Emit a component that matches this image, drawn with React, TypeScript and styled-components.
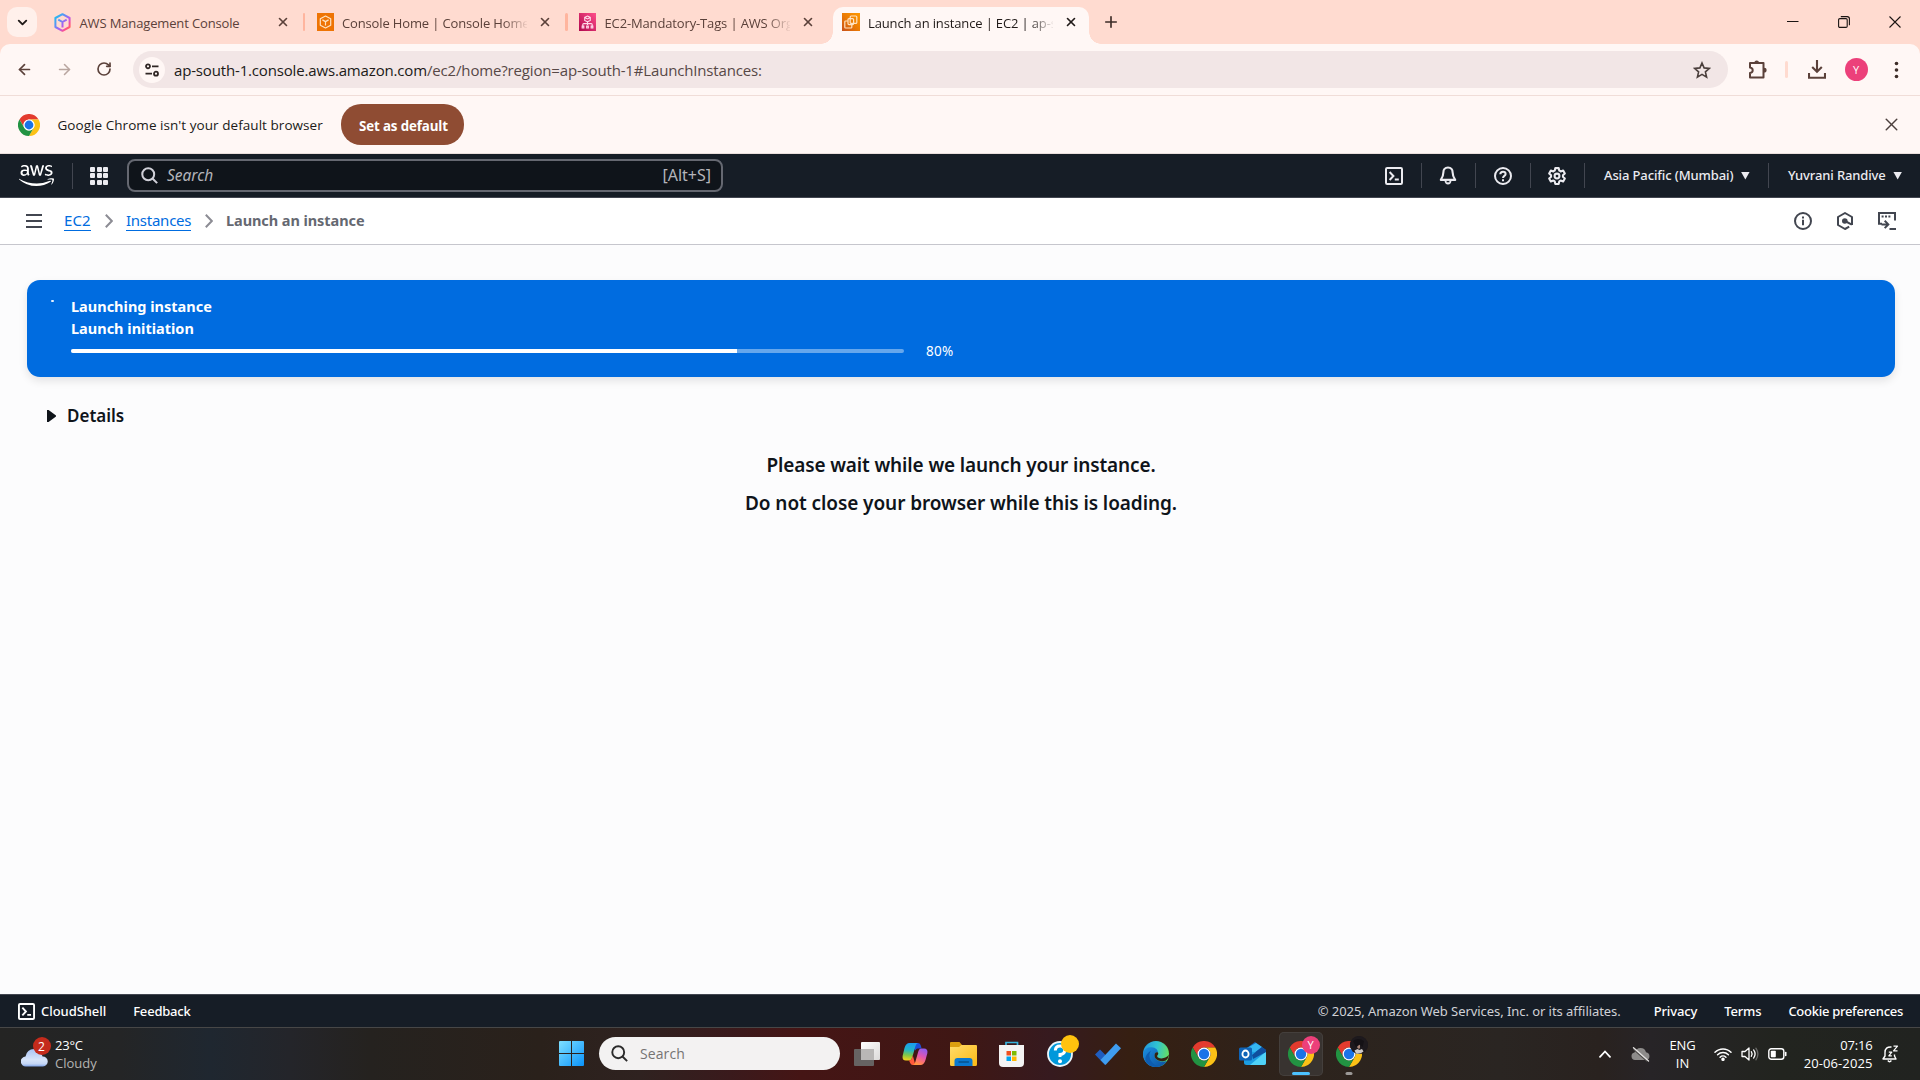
import React from "react";
import styled, { createGlobalStyle, css } from "styled-components";
import { ArrowLeft, ArrowRight, ChevronDown, Plus, RotateCw, X } from "lucide-react";
import { FaAws } from "react-icons/fa";

const SEGOE = `"Open Sans", "Noto Sans", sans-serif`;
const EMBER = `"Noto Sans", "Open Sans", sans-serif`;

const GlobalStyle = createGlobalStyle`
  *, *::before, *::after { box-sizing: border-box; }
  body { margin: 0; background: #fcfcfd; overflow: hidden; }
  svg { display: block; flex: none; }
`;

const Screen = styled.div`
  width: 1920px;
  height: 1080px;
  display: flex;
  flex-direction: column;
  overflow: hidden;
  background: #fcfcfd;
  font-family: ${SEGOE};
`;

const Label = styled.span<{ $size: number; $ls?: number; $weight?: number; $color?: string; $dy?: number }>`
  display: block;
  flex: none;
  white-space: nowrap;
  font-size: ${(p) => p.$size}px;
  letter-spacing: ${(p) => p.$ls ?? 0}px;
  font-weight: ${(p) => p.$weight ?? 400};
  color: ${(p) => p.$color ?? "inherit"};
  padding-top: ${(p) => Math.max(0, (p.$dy ?? 0) * 2)}px;
  padding-bottom: ${(p) => Math.max(0, -(p.$dy ?? 0) * 2)}px;
`;

/* ---------- browser tab strip ---------- */

const TabStrip = styled.div`
  height: 44px;
  flex: none;
  display: flex;
  align-items: flex-start;
  background: #ffdbd0;
`;

const TabSearch = styled.div`
  width: 30px;
  height: 30px;
  margin: 7px 8.5px 0 7px;
  border-radius: 10px;
  background: #fff0eb;
  color: #201a18;
  display: flex;
  align-items: center;
  justify-content: center;
`;

const Tab = styled.div<{ $active?: boolean }>`
  position: relative;
  width: 262.5px;
  height: 44px;
  padding: 0 0 0 8.5px;
  display: flex;
  align-items: center;
  color: ${(p) => (p.$active ? "#201a18" : "#5b413a")};
  ${(p) =>
    p.$active &&
    css`
      &::before {
        content: "";
        position: absolute;
        inset: 7px 6.5px 0 0;
        border-radius: 10px 10px 0 0;
        background: #fff7f5;
      }
      &::after {
        content: "";
        position: absolute;
        left: -12px;
        right: -5.5px;
        bottom: 0;
        height: 12px;
        background: radial-gradient(circle at 0 0, transparent 11.5px, #fff7f5 12px) left / 12px 12px no-repeat,
          radial-gradient(circle at 100% 0, transparent 11.5px, #fff7f5 12px) right / 12px 12px no-repeat;
      }
    `}
  & > * {
    position: relative;
    z-index: 1;
  }
`;

const TabTitle = styled.div<{ $fade: boolean }>`
  width: 185px;
  margin-left: 8.5px;
  ${(p) =>
    p.$fade &&
    css`
      mask-image: linear-gradient(90deg, #000 87%, transparent 101%);
    `}
`;

const TabClose = styled.div`
  width: 19px;
  margin-left: 8.5px;
  display: flex;
  justify-content: center;
`;

const TabDivider = styled.i<{ $hidden?: boolean }>`
  width: 2.5px;
  height: 18px;
  margin-left: 10.5px;
  border-radius: 2px;
  background: ${(p) => (p.$hidden ? "transparent" : "#ffb59e")};
`;

const NewTab = styled.div`
  height: 44px;
  margin-left: 6px;
  display: flex;
  align-items: center;
  color: #3d2c27;
`;

const WindowControls = styled.div`
  margin-left: auto;
  height: 44px;
  padding-right: 19px;
  display: flex;
  align-items: center;
  gap: 39px;
`;

/* ---------- browser toolbar ---------- */

const ToolbarShell = styled.div`
  flex: none;
  background: #ffdbd0;
`;

const Toolbar = styled.div`
  height: 52px;
  padding: 0 17px 0 16px;
  display: flex;
  align-items: center;
  background: #fff7f5;
  border-radius: 10px 10px 0 0;
  border-bottom: 1px solid #f0ddd8;
  color: #5b413a;
`;

const NavButtons = styled.div`
  display: flex;
  gap: 23px;
  width: 117px;
`;

const Omnibox = styled.div`
  width: 1595px;
  height: 37px;
  padding: 0 17px 0 6px;
  display: flex;
  align-items: center;
  border-radius: 19px;
  background: #f2e6e6;
  color: #201a18;
  & em {
    font-style: normal;
    color: #574846;
  }
`;

const SiteInfo = styled.div`
  width: 26px;
  height: 26px;
  margin-right: 9px;
  border-radius: 50%;
  background: #fff7f5;
  display: flex;
  align-items: center;
  justify-content: center;
`;

const Push = styled.div`
  margin-left: auto;
  display: flex;
`;

const ToolbarTools = styled.div`
  flex: 1;
  display: flex;
  align-items: center;
  padding-left: 20px;
`;

const ToolDivider = styled.i`
  width: 2.5px;
  height: 17px;
  margin: 0 20px 0 18px;
  border-radius: 2px;
  background: #ffdbd0;
`;

const Avatar = styled.div`
  width: 23px;
  height: 23px;
  margin: 0 26px 0 19px;
  border-radius: 50%;
  background: #ec407a;
  color: #fff;
  display: flex;
  align-items: center;
  justify-content: center;
`;

/* ---------- default-browser info bar ---------- */

const InfoBar = styled.div`
  height: 58px;
  flex: none;
  padding: 0 18px 0 18px;
  display: flex;
  align-items: center;
  background: #fff7f5;
  border-bottom: 1px solid #eadfdc;
  color: #201a18;
`;

const InfoText = styled.div`
  width: 283px;
  margin-left: 17.5px;
  margin-right: 0.5px;
`;

const DefaultButton = styled.button`
  width: 123px;
  height: 41px;
  padding: 0 0 0 18px;
  border: 0;
  border-radius: 20px;
  background: #8f4c33;
  color: #fff;
  font-family: inherit;
  text-align: left;
`;

/* ---------- AWS navigation ---------- */

const AwsNav = styled.header`
  height: 44px;
  flex: none;
  display: flex;
  align-items: center;
  padding-left: 19px;
  background: #161d26;
  border-bottom: 1px solid #424650;
  color: #ebebf0;
  font-family: ${EMBER};
`;

const LogoCell = styled.div`
  width: 54px;
  height: 26px;
  display: flex;
  align-items: center;
  border-right: 1px solid #424650;
  color: #fff;
`;

const ServicesGrid = styled.div`
  width: 18px;
  margin: 0 19px 0 17px;
  display: grid;
  grid-template-columns: repeat(3, 5px);
  gap: 1.5px;
  & i {
    height: 5px;
    border-radius: 1px;
    background: #ebebf0;
  }
`;

const SearchBox = styled.div`
  width: 596px;
  height: 33px;
  padding: 0 10px 0 12px;
  display: flex;
  align-items: center;
  border: 2px solid #656871;
  border-radius: 8px;
  background: #0f141a;
  color: #b4b4bb;
`;

const Placeholder = styled.div`
  margin-left: 9px;
  font-style: italic;
`;

const NavRight = styled.div`
  margin-left: auto;
  display: flex;
  align-items: center;
`;

const NavIcon = styled.div<{ $first?: boolean }>`
  width: 54.5px;
  height: 25px;
  display: flex;
  align-items: center;
  justify-content: center;
  border-left: 1px solid ${(p) => (p.$first ? "transparent" : "#424650")};
`;

const NavMenu = styled.div<{ $w: number }>`
  width: ${(p) => p.$w}px;
  height: 25px;
  padding-left: 19px;
  display: flex;
  align-items: center;
  gap: 7.5px;
  border-left: 1px solid #424650;
`;

const Caret = styled.i`
  width: 9px;
  height: 8px;
  background: currentColor;
  clip-path: polygon(0 0, 100% 0, 50% 100%);
`;

const Breadcrumbs = styled.nav`
  height: 47px;
  flex: none;
  padding: 0 24px 1px 26px;
  display: flex;
  align-items: center;
  background: #fff;
  border-bottom: 1px solid #c6c6cd;
  color: #424650;
  font-family: ${EMBER};
`;

const Crumb = styled.div<{ $link?: boolean; $w: number }>`
  width: ${(p) => p.$w}px;
  height: 21px;
  display: flex;
  align-items: center;
  color: ${(p) => (p.$link ? "#006ce0" : "#656871")};
  border-bottom: 1px solid ${(p) => (p.$link ? "#006ce0" : "transparent")};
`;

const CrumbGap = styled.div`
  width: 35px;
  display: flex;
  justify-content: center;
  color: #8c8c94;
`;

const CrumbTools = styled.div`
  margin-left: auto;
  display: flex;
  gap: 24px;
`;

/* ---------- page content ---------- */

const Content = styled.main`
  flex: 1;
  padding: 35px 25px 0 27px;
  color: #0f141a;
  font-family: ${EMBER};
`;

const Flash = styled.section`
  height: 97px;
  padding: 15px 0 0 24px;
  display: flex;
  gap: 17px;
  border-radius: 13px;
  background: #006ce0;
  color: #fff;
  box-shadow: 0 4px 8px rgba(0, 7, 22, 0.1);
`;

const SpinnerMark = styled.i`
  width: 3px;
  height: 2px;
  margin: 5px 0 0;
  border-radius: 1px;
  background: #e8f1fd;
`;

const FlashBody = styled.div`
  display: flex;
  flex-direction: column;
  & > span {
    line-height: 22px;
  }
`;

const ProgressRow = styled.div`
  height: 24px;
  display: flex;
  align-items: center;
  gap: 22px;
`;

const Track = styled.div`
  width: 833px;
  height: 4px;
  border-radius: 3px;
  overflow: hidden;
  background: #66a7ec;
`;

const Fill = styled.div`
  height: 100%;
  background: #fff;
`;

const Details = styled.div`
  margin: 26px 0 0 20px;
  height: 26px;
  display: flex;
  align-items: center;
  gap: 11px;
`;

const Disclosure = styled.i`
  width: 9px;
  height: 12px;
  background: #0f141a;
  clip-path: polygon(0 0, 18% 0, 100% 45%, 100% 55%, 18% 100%, 0 100%);
`;

const WaitMessage = styled.div`
  margin-top: 17px;
  display: flex;
  flex-direction: column;
  align-items: center;
  & > span {
    line-height: 38px;
  }
`;

const Footer = styled.footer`
  height: 33px;
  flex: none;
  padding: 0 17px 0 18px;
  display: flex;
  align-items: center;
  background: #161d26;
  border-top: 1px solid #424650;
  color: #fff;
  font-family: ${EMBER};
`;

const FooterItem = styled.div<{ $gap: number }>`
  margin-left: ${(p) => p.$gap}px;
`;

/* ---------- Windows taskbar ---------- */

const Taskbar = styled.div`
  height: 53px;
  flex: none;
  display: flex;
  align-items: center;
  padding-bottom: 1px;
  border-top: 1px solid #474747;
  background: linear-gradient(
    90deg,
    #242423 0,
    #242526 120px,
    #1f2730 210px,
    #24252a 290px,
    #25221f 370px,
    #2a211b 540px,
    #2f2220 640px,
    #3a1a1c 730px,
    #451515 800px,
    #3f1714 960px,
    #361a1f 1050px,
    #361f12 1130px,
    #2d231c 1290px,
    #2a2522 1500px,
    #29221f 1600px,
    #272427 1650px,
    #22241f 1780px,
    #212320 1920px
  );
  color: #fff;
`;

const Weather = styled.div`
  width: 559px;
  padding-left: 21px;
  display: flex;
  align-items: center;
`;

const WeatherIcon = styled.div`
  position: relative;
  width: 34px;
  height: 30px;
  padding-top: 9px;
`;

const Badge = styled.div<{ $x: number; $y: number; $bg: string }>`
  position: absolute;
  left: ${(p) => p.$x}px;
  top: ${(p) => p.$y}px;
  width: 18px;
  height: 18px;
  border-radius: 50%;
  background: ${(p) => p.$bg};
  display: flex;
  align-items: center;
  justify-content: center;
`;

const TwoLine = styled.div<{ $align?: string }>`
  display: flex;
  flex-direction: column;
  align-items: ${(p) => p.$align ?? "flex-start"};
  & > span {
    line-height: 18px;
  }
`;

const TaskSearch = styled.div`
  width: 241px;
  height: 33px;
  margin: 0 3px 0 15px;
  padding-left: 12px;
  display: flex;
  align-items: center;
  gap: 12px;
  border-radius: 17px;
  background: #f3f2f2;
  color: #767472;
`;

const TaskSlot = styled.div<{ $active?: boolean; $mark?: "wide" | "dot" }>`
  position: relative;
  width: 44.2px;
  height: 44px;
  margin: 0 2px;
  display: flex;
  align-items: center;
  justify-content: center;
  border-radius: 5px;
  ${(p) =>
    p.$active &&
    css`
      background: #383330;
      box-shadow: inset 0 0 0 1px #443f3c;
    `}
  ${(p) =>
    p.$mark &&
    css`
      &::after {
        content: "";
        position: absolute;
        left: 50%;
        bottom: 1px;
        width: ${p.$mark === "wide" ? 18 : 7}px;
        height: 3px;
        transform: translateX(-50%);
        border-radius: 2px;
        background: ${p.$mark === "wide" ? "#4cc2ff" : "#9b9896"};
      }
    `}
`;

const Tray = styled.div`
  margin-left: auto;
  display: flex;
  align-items: center;
  padding-right: 21px;
`;

const TrayItem = styled.div<{ $gap: number }>`
  margin-left: ${(p) => p.$gap}px;
`;

/* ---------- icons ---------- */

const ChromeLogo = ({ size }: { size: number }) => (
  <svg width={size} height={size} viewBox="0 0 48 48">
    <path fill="#e33b2e" d="M24 12H44.8A24 24 0 0 0 3.2 12L13.6 30A12 12 0 0 1 24 12Z" />
    <path fill="#fbc116" d="M44.8 12A24 24 0 0 1 24 48L34.4 30A12 12 0 0 0 24 12Z" />
    <path fill="#229342" d="M24 48A24 24 0 0 1 3.2 12L13.6 30A12 12 0 0 0 34.4 30Z" />
    <circle cx="24" cy="24" r="12" fill="#fff" />
    <circle cx="24" cy="24" r="9.6" fill="#1a73e8" />
  </svg>
);

const CubeIcon = () => (
  <svg width="17" height="19" viewBox="0 0 17 19" fill="none" strokeWidth="2" strokeLinejoin="round">
    <defs>
      <linearGradient id="cube" x1="0" y1="0" x2="1" y2="1">
        <stop offset="0" stopColor="#12c8f0" />
        <stop offset="0.35" stopColor="#5f8ff5" />
        <stop offset="0.6" stopColor="#b05cf0" />
        <stop offset="0.8" stopColor="#ff4f8e" />
        <stop offset="1" stopColor="#ff7a3c" />
      </linearGradient>
    </defs>
    <path stroke="url(#cube)" d="M8.5 1.2 15.6 5v9L8.5 17.8 1.4 14V5ZM4.3 6.6 8.5 9l4.2-2.4M8.5 9v5.6" />
  </svg>
);

const ConsoleIcon = () => (
  <svg width="17" height="18" viewBox="0 0 17 18" fill="none" stroke="#ffe3c2" strokeWidth="1.2" strokeLinejoin="round">
    <rect width="17" height="18" fill="#ee7404" stroke="none" />
    <path d="M8.5 3 13.7 5.8v6.4L8.5 15 3.3 12.2V5.8ZM5.4 6.9 8.5 8.6l3.1-1.7M8.5 8.6v3.8" />
  </svg>
);

const OrgIcon = () => (
  <svg width="17" height="18" viewBox="0 0 17 18" fill="none" stroke="#ffd9ea" strokeWidth="1.1">
    <defs>
      <linearGradient id="org" x1="0" y1="1" x2="1" y2="0">
        <stop offset="0" stopColor="#b0084d" />
        <stop offset="1" stopColor="#ff4f8b" />
      </linearGradient>
    </defs>
    <rect width="17" height="18" fill="url(#org)" stroke="none" />
    <path d="M8.5 3 11.3 4.4v3L8.5 8.8 5.7 7.4v-3ZM6.2 4.8l2.3 1.2 2.3-1.2M8.5 9v3M3.8 13v-1.400q0-1 1-1h7.400q1 0 1 1V13" />
    <path strokeWidth="1.2" d="M3.200 13.200h1.600v1.800H3.200zM7.700 13.200h1.600v1.800H7.700zM12.200 13.200h1.600v1.800h-1.600z" />
  </svg>
);

const Ec2Icon = () => (
  <svg width="18" height="18" viewBox="0 0 18 18" fill="none" stroke="#ffe3c2" strokeWidth="1.2">
    <defs>
      <linearGradient id="ec2" x1="0" y1="1" x2="1" y2="0">
        <stop offset="0" stopColor="#c8511b" />
        <stop offset="0.5" stopColor="#ec7c04" />
        <stop offset="1" stopColor="#f90" />
      </linearGradient>
    </defs>
    <rect width="18" height="18" fill="url(#ec2)" stroke="none" />
    <rect x="8.2" y="3" width="6.600" height="7.400" rx="1" />
    <rect x="6" y="5.600" width="5.600" height="6" rx="1" />
    <path d="M5.800 8H3.600q-.8 0-.8.8v5.400q0 .8.8.8H9q.8 0 .8-.8V12" />
  </svg>
);

const ShellIcon = ({ size = 18 }: { size?: number }) => (
  <svg width={size} height={size} viewBox="0 0 18 18" fill="none" stroke="currentColor" strokeWidth="2">
    <rect x="1" y="1" width="16" height="16" rx="1.2" />
    <path d="M4.600 5 8.400 9l-3.800 4M9.800 12.600h4" />
  </svg>
);

const BellIcon = () => (
  <svg width="18" height="19" viewBox="0 0 18 19" fill="none" stroke="currentColor" strokeWidth="2.100" strokeLinejoin="round">
    <path d="M9 1.500c-3.200 0-4.600 2-4.600 4.800 0 3.400-.8 5-2.600 7.600h14.400c-1.800-2.600-2.600-4.200-2.600-7.600C13.600 3.500 12.200 1.500 9 1.500Z" />
    <path fill="currentColor" stroke="none" d="M5.500 14.500h7q-.4 3.900-3.500 3.900t-3.500-3.900Z" />
    <path stroke="#161d26" strokeWidth="1.400" d="M7.600 15.600h2.800" />
  </svg>
);

const HelpIcon = () => (
  <svg width="18" height="18" viewBox="0 0 18 18" fill="none" stroke="currentColor" strokeWidth="2">
    <circle cx="9" cy="9" r="8" />
    <path d="M6.300 7.200C6.300 5.400 7.500 4.700 9 4.700s2.600.8 2.600 2.200C11.600 8.900 9 8.800 9 11M9 12.200v2" />
  </svg>
);

const GearIcon = () => (
  <svg width="20" height="20" viewBox="0 0 24 24" fill="none" stroke="currentColor" strokeWidth="2.500" strokeLinejoin="round">
    <path d="M10 2.500h4l.7 3q1 .4 1.700 1l3-1 2 3.400-2.300 2.100q.2 1 0 2l2.300 2.100-2 3.400-3-1q-.7.600-1.700 1l-.7 3h-4l-.7-3q-1-.4-1.700-1l-3 1-2-3.400L4.900 13q-.2-1 0-2L2.600 8.900l2-3.400 3 1q.7-.6 1.700-1Z" />
    <circle cx="12" cy="12" r="2.900" />
  </svg>
);

const InfoIcon = () => (
  <svg width="18" height="18" viewBox="0 0 18 18" fill="none" stroke="currentColor" strokeWidth="2">
    <circle cx="9" cy="9" r="8" />
    <path d="M9 7.800v5.500M9 4.500v2" />
  </svg>
);

const HexIcon = () => (
  <svg width="18" height="18" viewBox="0 0 18 18" fill="none" stroke="currentColor" strokeWidth="2" strokeLinejoin="round">
    <path d="M13.200 14.700 9 17l-7-4V5l7-4 7 4v8" />
    <circle cx="8.800" cy="9" r="2.800" fill="currentColor" stroke="none" />
    <path d="m9 9 6.800 3.600" />
  </svg>
);

const TerminalIcon = () => (
  <svg width="18" height="18" viewBox="0 0 18 18" fill="none" stroke="currentColor" strokeWidth="2">
    <path d="M4 11.800H1V1h16v7.500" />
    <path d="M3.600 4.600h2M7 4.600h2M10.400 4.600h2" />
    <path d="M3.500 12.400h6.500M6.700 8.800l3.600 3.600-3.600 3.700M11.500 17H18" />
  </svg>
);

const CrumbChevron = () => (
  <svg width="8" height="14" viewBox="0 0 8 14" fill="none" stroke="currentColor" strokeWidth="2">
    <path d="m.8.800 6 6.200-6 6.200" />
  </svg>
);

const SearchIcon = ({ size, stroke, width = 2 }: { size: number; stroke: string; width?: number }) => (
  <svg width={size} height={size} viewBox="0 0 16 16" fill="none" stroke={stroke} strokeWidth={width}>
    <circle cx="6.800" cy="6.800" r="5.600" />
    <path d="m10.800 10.800 4.400 4.400" />
  </svg>
);

const WindowsLogo = () => (
  <svg width="25" height="25" viewBox="0 0 25 25">
    <defs>
      <linearGradient id="win" gradientUnits="userSpaceOnUse" x1="0" y1="0" x2="25" y2="25">
        <stop offset="0" stopColor="#7fe0ff" />
        <stop offset="1" stopColor="#0a93fb" />
      </linearGradient>
    </defs>
    <path fill="url(#win)" d="M1 0h11v12H0V1q0-1 1-1ZM13 0h11q1 0 1 1v11H13ZM0 13h12v12H1q-1 0-1-1ZM13 13h12v11q0 1-1 1H13Z" />
  </svg>
);

const TaskViewIcon = () => (
  <svg width="26" height="24" viewBox="0 0 26 24">
    <defs>
      <linearGradient id="tv" x1="0" y1="0" x2="1" y2="1">
        <stop offset="0" stopColor="#fff" />
        <stop offset="1" stopColor="#dcdad9" />
      </linearGradient>
    </defs>
    <rect y="7" width="20" height="17" rx="1" fill="#666362" />
    <rect x="7" width="19" height="18" rx="1" fill="url(#tv)" />
    <path d="M7 7h13v11H7Z" fill="#b9b7b6" />
  </svg>
);

const CopilotIcon = () => (
  <svg width="26" height="24" viewBox="0 0 26 24">
    <defs>
      <linearGradient id="cpA" x1="0.500" y1="0" x2="0.400" y2="1">
        <stop offset="0" stopColor="#1a9cf0" />
        <stop offset="0.400" stopColor="#22b5c8" />
        <stop offset="0.700" stopColor="#7fc64a" />
        <stop offset="1" stopColor="#f5d21a" />
      </linearGradient>
      <linearGradient id="cpB" x1="0.700" y1="0" x2="0.300" y2="1">
        <stop offset="0" stopColor="#8f5cf0" />
        <stop offset="0.450" stopColor="#e156b0" />
        <stop offset="0.800" stopColor="#ff7b63" />
        <stop offset="1" stopColor="#ff9a3c" />
      </linearGradient>
    </defs>
    <path fill="#1d4fd8" d="M9 1h7q2 0 2.600 2l1 3.500h-4q-1.600 0-2.200 2z" />
    <path fill="url(#cpA)" d="M7.500 1H16q-1.800.4-2.500 3l-3.300 11.500Q9.400 18.500 7 18.500H4Q0 18.500.6 14L2.500 6Q4 1 7.500 1Z" />
    <path fill="#ff5a3c" d="M7 18.500q2.400 0 3.200-3l.6-2 2.600 9.500h-2.600q-2 0-2.600-2Z" />
    <path fill="url(#cpB)" d="M18.500 23H11q1.700-.6 2.300-3l3-10.500q.8-3 3.200-3H22q4 0 3.400 4.500L23.500 18q-1.500 5-5 5Z" />
  </svg>
);

const FolderIcon = () => (
  <svg width="27" height="24" viewBox="0 0 27 24">
    <defs>
      <linearGradient id="fo" x1="0" y1="0" x2="1" y2="1">
        <stop offset="0" stopColor="#ffdc6b" />
        <stop offset="1" stopColor="#fbb914" />
      </linearGradient>
    </defs>
    <path fill="#dc9f10" d="M1 0h8.500l2.500 3H26v8H0V1q0-1 1-1Z" />
    <path fill="url(#fo)" d="M0 5h9l2.500-2H26q1 0 1 1v18.500q0 1.500-1.500 1.500h-24Q0 24 0 22.500Z" />
    <path fill="#0a78cf" d="M4.500 24v-5q0-3 3-3h12q3 0 3 3v5Z" />
    <path stroke="#06518f" strokeWidth="1.400" strokeLinecap="round" d="M9 20h9.500" />
  </svg>
);

const StoreIcon = () => (
  <svg width="25" height="26" viewBox="0 0 25 26">
    <path fill="none" stroke="#37b4dd" strokeWidth="1.700" d="M7 5V1.500h11.500V5" />
    <path fill="#f4f3f3" d="M0 4h25v18q0 4-4 4H4q-4 0-4-4Z" />
    <path fill="#f0501f" d="M7.500 10h4.500v4.500H7.500Z" />
    <path fill="#7fba00" d="M13 10h4.500v4.500H13Z" />
    <path fill="#00a4ef" d="M7.500 15.500h4.500V20H7.500Z" />
    <path fill="#ffb900" d="M13 15.500h4.500V20H13Z" />
  </svg>
);

const GetHelpIcon = () => (
  <svg width="26" height="26" viewBox="0 0 26 26">
    <circle cx="13" cy="13" r="12" fill="#0098db" stroke="#eaf6fc" strokeWidth="1.800" />
    <path fill="none" stroke="#fff" strokeWidth="3" d="M8.300 9.500Q8.600 5 13 5t4.700 4.200Q17.700 13 13 13.500V16" />
    <circle cx="13" cy="20.300" r="2" fill="#fff" />
  </svg>
);

const TodoIcon = () => (
  <svg width="26" height="22" viewBox="0 0 26 22">
    <path fill="#1f5dbf" d="m0 11.500 5-5 6 6-1 9.500Z" />
    <path fill="#3f9df0" d="M5.500 17 21 .5l5 4.800L10.500 22Z" />
  </svg>
);

const EdgeIcon = () => (
  <svg width="26" height="26" viewBox="0 0 26 26">
    <defs>
      <linearGradient id="edA" x1="0" y1="0.300" x2="1" y2="0.500">
        <stop offset="0" stopColor="#2398dc" />
        <stop offset="0.500" stopColor="#30c3d2" />
        <stop offset="1" stopColor="#66e05f" />
      </linearGradient>
      <linearGradient id="edB" x1="0" y1="0" x2="1" y2="1">
        <stop offset="0" stopColor="#1b8fe0" />
        <stop offset="1" stopColor="#0c4fa0" />
      </linearGradient>
    </defs>
    <circle cx="13" cy="13" r="13" fill="url(#edA)" />
    <path fill="url(#edB)" d="M0 12Q2 6 8.500 6.300c4.500.2 6.500 3 6.500 5.200-1.500-1-3.500.5-3.500 3 0 4 5 7.500 12.500 5.500Q20 26 13 26 1 25.500 0 12Z" />
    <path fill="#0d5cb0" d="M8 9.500Q4.500 15 8.500 20.500 11.500 25 17 25.300 8 27.500 3 21 .5 15 8 9.500Z" />
    <path fill="#35200f" d="M15 11.500c1 2-1 2.500-.8 4 .3 1.800 5 2.800 8.800.8q2-1 2.900-2.800-.3 4-2.900 6c-6 2-11.500-1-11.500-5 0-2.500 1.500-4 3.500-3Z" />
  </svg>
);

const OutlookIcon = () => (
  <svg width="27" height="23" viewBox="0 0 27 23">
    <path fill="#1366b8" d="M5 8 16 0l11 8v4L10 18Z" />
    <path fill="#35b7f1" d="M8 6 17 1l6 4-12 9Z" />
    <path fill="#1b9de2" d="M5 9l22 2v9.500q0 2.500-2.500 2.500h-17Q5 23 5 20.500Z" />
    <path fill="#4fd2f7" d="M27 9.500V21q0 2-2 2H11Z" />
    <path fill="#0f4f9e" d="m13 13 10-8 4 3v2L14 17Z" />
    <rect y="5.500" width="13" height="13" rx="1.500" fill="#0f64b8" />
    <ellipse cx="6.500" cy="12" rx="3.100" ry="3.500" fill="none" stroke="#fff" strokeWidth="1.800" />
  </svg>
);

const CloudIcon = () => (
  <svg width="27" height="19" viewBox="0 0 27 19">
    <defs>
      <linearGradient id="cl" x1="0" y1="0" x2="0" y2="1">
        <stop offset="0" stopColor="#a9c4f5" />
        <stop offset="0.600" stopColor="#d6e4fa" />
        <stop offset="0.850" stopColor="#c4d6f6" />
        <stop offset="1" stopColor="#7fa3e8" />
      </linearGradient>
    </defs>
    <path fill="url(#cl)" d="M5 18.500a5 5 0 0 1-.5-10Q6 1 13 1t8.500 7.500a5 5 0 0 1 .5 10Z" />
  </svg>
);

const PersonBadge = () => (
  <svg width="18" height="18" viewBox="0 0 18 18">
    <circle cx="9" cy="9" r="9" fill="#1d191d" />
    <path fill="#a58274" d="M7.300 8.500h2.700v3.500L9 13l-1.700-1.200Z" />
    <path fill="#cfcbca" d="m4.500 14.500 3-1.500 2 1 2.500-1 1.500 2.500A9 9 0 0 1 6 17.500Z" />
    <path fill="#141115" d="M3 5q5-4 11 0l-1.500 6L10 8.500 6 11Z" />
  </svg>
);

const StarIcon = () => (
  <svg width="18" height="18" viewBox="0 0 18 18" fill="none" stroke="#4b3f3c" strokeWidth="1.600">
    <path d="m9 2 2.100 4.900 5.300.5-4 3.500 1.200 5.200L9 13.400l-4.600 2.700 1.200-5.200-4-3.500 5.300-.5Z" />
  </svg>
);

const PuzzleIcon = () => (
  <svg width="19" height="21" viewBox="0 0 19 21" fill="none" stroke="#5b413a" strokeWidth="2" strokeLinejoin="round">
    <path d="M2 4h13.500v14.500H2v-4.600c3.600-.6 3.600-4.900 0-5.500Z" />
    <path fill="#5b413a" stroke="none" d="M6.300 4a2.400 2.600 0 0 1 4.800 0ZM16 8.800a2.600 2.400 0 0 1 0 4.800Z" />
  </svg>
);

const DownloadIcon = () => (
  <svg width="18" height="19" viewBox="0 0 18 19" fill="none" stroke="#5b413a" strokeWidth="2.100">
    <path d="M9 0v11.500M4.200 7 9 11.800 13.800 7M1 13v4.800h16V13" />
  </svg>
);

const TrayChevron = () => (
  <svg width="12" height="8" viewBox="0 0 12 8" fill="none" stroke="#fff" strokeWidth="1.800" strokeLinecap="round">
    <path d="m1 6.800 5-5.300 5 5.300" />
  </svg>
);

const WifiIcon = () => (
  <svg width="18" height="14" viewBox="0 0 18 14" fill="none" stroke="#fff" strokeWidth="1.500" strokeLinecap="round">
    <path d="M1 5.200a11.300 11.300 0 0 1 16 0M3.600 7.800a7.700 7.700 0 0 1 10.800 0M6.100 10.200a4.200 4.200 0 0 1 5.800 0" />
    <circle cx="9" cy="12.300" r="1" fill="#fff" />
  </svg>
);

const SpeakerIcon = () => (
  <svg width="18" height="16" viewBox="0 0 18 16" fill="none" stroke="#fff" strokeWidth="1.300" strokeLinejoin="round">
    <path d="M1 5.500h3L8 2v12l-4-3.500H1Z" />
    <path strokeLinecap="round" d="M10.300 5.700q1.600 2.300 0 4.600M12.600 3.900q3 4.100 0 8.200" />
    <path stroke="#6b6b69" strokeLinecap="round" d="M14.900 2.200q4 5.800 0 11.600" />
  </svg>
);

const BatteryIcon = () => (
  <svg width="19" height="12" viewBox="0 0 19 12">
    <rect x="0.800" y="0.800" width="15" height="10.400" rx="2.500" fill="none" stroke="#fff" strokeWidth="1.400" />
    <rect x="2.800" y="2.800" width="5" height="6.400" rx="0.800" fill="#fff" />
    <path stroke="#fff" strokeWidth="1.600" strokeLinecap="round" d="M17.700 4.500v3" />
  </svg>
);

const OneDriveOff = () => (
  <svg width="19" height="16" viewBox="0 0 19 16">
    <path fill="#8d8b8a" d="M4 14a3.800 3.800 0 0 1-.5-7.500Q5 2 9.500 2T15 6.300a3.900 3.900 0 0 1 .3 7.700Z" />
    <path stroke="#4a4745" strokeWidth="1.200" d="m2.400 3.200 13.600 12" />
    <path stroke="#e2e0df" strokeWidth="1.400" strokeLinecap="round" d="m2.500 1.700 15 13.300" />
  </svg>
);

const SnoozeBell = () => (
  <svg width="17" height="18" viewBox="0 0 17 18" fill="none" stroke="#fff" strokeWidth="1.400" strokeLinejoin="round">
    <path d="M9.500 2Q3 1.500 3 7.500v3.500L1 14h13l-1.500-3V9.500M5.800 15.500q1.700 2.400 3.600 0" />
    <path strokeWidth="1.200" d="M11.500 1.200h4l-4 4.600h4M6.800 7.200h3l-3 3.600h3" />
  </svg>
);

const MinimizeIcon = () => (
  <svg width="12" height="12" viewBox="0 0 12 12" stroke="#1b1513" strokeWidth="1">
    <path d="M0 5.500h11.500" />
  </svg>
);

const RestoreIcon = () => (
  <svg width="12" height="12" viewBox="0 0 12 12" fill="none" stroke="#1b1513" strokeWidth="1.100">
    <rect x="0.600" y="2.600" width="8.600" height="8.800" rx="1.200" />
    <path d="M2.800.6h6.400q2.200 0 2.200 2.200v6.400" />
  </svg>
);

const CloseIcon = () => (
  <svg width="12" height="12" viewBox="0 0 12 12" stroke="#1b1513" strokeWidth="1.100">
    <path d="m.5.500 11 11M11.500.500l-11 11" />
  </svg>
);

const TuneIcon = () => (
  <svg width="14" height="14" viewBox="0 0 14 14" fill="none" stroke="#2f2624" strokeWidth="1.800">
    <circle cx="3" cy="3.300" r="2" />
    <path d="M7 3.300h6.500M.5 10.700H7" />
    <circle cx="11" cy="10.700" r="2" />
  </svg>
);

const tabs = [
  { icon: <CubeIcon />, title: "AWS Management Console" },
  { icon: <ConsoleIcon />, title: "Console Home | Console Home", fade: true },
  { icon: <OrgIcon />, title: "EC2-Mandatory-Tags | AWS Org", fade: true },
  { icon: <Ec2Icon />, title: "Launch an instance | EC2 | ap-so", fade: true, active: true },
];

const PROGRESS = 80;

export default function App() {
  return (
    <Screen>
      <GlobalStyle />
      <TabStrip>
        <TabSearch>
          <ChevronDown size={15} strokeWidth={3} />
        </TabSearch>
        {tabs.map((t, i) => (
          <Tab key={t.title} $active={t.active}>
            {t.icon}
            <TabTitle $fade={!!t.fade}>
              <Label $size={13} $ls={-0.14} $dy={1}>{t.title}</Label>
            </TabTitle>
            <TabClose>
              <X size={14} strokeWidth={2.8} />
            </TabClose>
            <TabDivider $hidden={i > 1} />
          </Tab>
        ))}
        <NewTab>
          <Plus size={18} strokeWidth={2.200} />
        </NewTab>
        <WindowControls>
          <MinimizeIcon />
          <RestoreIcon />
          <CloseIcon />
        </WindowControls>
      </TabStrip>

      <ToolbarShell>
        <Toolbar>
          <NavButtons>
            <ArrowLeft size={17} strokeWidth={2.4} />
            <ArrowRight size={17} strokeWidth={2.2} color="#b9a6a0" />
            <RotateCw size={16} strokeWidth={2.5} />
          </NavButtons>
          <Omnibox>
            <SiteInfo>
              <TuneIcon />
            </SiteInfo>
            <Label $size={15} $ls={-0.16}>
              ap-south-1.console.aws.amazon.com<em>/ec2/home?region=ap-south-1#LaunchInstances:</em>
            </Label>
            <Push>
              <StarIcon />
            </Push>
          </Omnibox>
          <ToolbarTools>
            <PuzzleIcon />
            <ToolDivider />
            <DownloadIcon />
            <Avatar>
              <Label $size={11}>Y</Label>
            </Avatar>
            <svg width="5" height="18" viewBox="0 0 5 18" fill="#3d2c27">
              <circle cx="2.500" cy="2.500" r="1.800" />
              <circle cx="2.500" cy="9" r="1.800" />
              <circle cx="2.500" cy="15.500" r="1.800" />
            </svg>
          </ToolbarTools>
        </Toolbar>
      </ToolbarShell>

      <InfoBar>
        <ChromeLogo size={22} />
        <InfoText>
          <Label $size={13.5} $ls={0.05} $dy={0.5}>Google Chrome isn't your default browser</Label>
        </InfoText>
        <DefaultButton>
          <Label $size={13.3} $ls={-0.12} $weight={700} $dy={1}>Set as default</Label>
        </DefaultButton>
        <Push>
          <X size={21} strokeWidth={1.7} color="#4b3f3c" />
        </Push>
      </InfoBar>

      <AwsNav>
        <LogoCell>
          <FaAws size={35} />
        </LogoCell>
        <ServicesGrid>
          {Array.from({ length: 9 }, (_, i) => (
            <i key={i} />
          ))}
        </ServicesGrid>
        <SearchBox>
          <SearchIcon size={17} stroke="#d0d0d8" width={1.9} />
          <Placeholder>
            <Label $size={15.5} $dy={-0.5}>Search</Label>
          </Placeholder>
          <Push>
            <Label $size={16} $dy={-1}>[Alt+S]</Label>
          </Push>
        </SearchBox>
        <NavRight>
          <NavIcon $first><ShellIcon /></NavIcon>
          <NavIcon><BellIcon /></NavIcon>
          <NavIcon><HelpIcon /></NavIcon>
          <NavIcon><GearIcon /></NavIcon>
          <NavMenu $w={184}>
            <Label $size={13} $ls={-0.12} $weight={500} $dy={-1}>Asia Pacific (Mumbai)</Label>
            <Caret />
          </NavMenu>
          <NavMenu $w={152}>
            <Label $size={13} $ls={-0.13} $weight={500} $dy={-1}>Yuvrani Randive</Label>
            <Caret />
          </NavMenu>
        </NavRight>
      </AwsNav>

      <Breadcrumbs>
        <svg width="38" height="14" viewBox="0 0 38 14" stroke="currentColor" strokeWidth="2">
          <path d="M0 1h16M0 7h16M0 13h16" />
        </svg>
        <Crumb $w={27} $link>
          <Label $size={15} $ls={0.1}>EC2</Label>
        </Crumb>
        <CrumbGap>
          <CrumbChevron />
        </CrumbGap>
        <Crumb $w={65} $link>
          <Label $size={15} $ls={-0.25}>Instances</Label>
        </Crumb>
        <CrumbGap>
          <CrumbChevron />
        </CrumbGap>
        <Crumb $w={140}>
          <Label $size={14.5} $ls={-0.07} $weight={700}>Launch an instance</Label>
        </Crumb>
        <CrumbTools>
          <InfoIcon />
          <HexIcon />
          <TerminalIcon />
        </CrumbTools>
      </Breadcrumbs>

      <Content>
        <Flash>
          <SpinnerMark />
          <FlashBody>
            <Label $size={14.5} $weight={700}>Launching instance</Label>
            <Label $size={14.5} $weight={700}>Launch initiation</Label>
            <ProgressRow>
              <Track>
                <Fill style={{ width: `${PROGRESS}%` }} />
              </Track>
              <Label $size={13.5} $ls={0.3} $dy={-0.5}>{PROGRESS}%</Label>
            </ProgressRow>
          </FlashBody>
        </Flash>
        <Details>
          <Disclosure />
          <Label $size={17} $weight={600} $dy={-0.5}>Details</Label>
        </Details>
        <WaitMessage>
          <Label $size={19} $ls={-0.13} $weight={600}>Please wait while we launch your instance.</Label>
          <Label $size={19} $ls={-0.08} $weight={600}>Do not close your browser while this is loading.</Label>
        </WaitMessage>
      </Content>

      <Footer>
        <ShellIcon size={17} />
        <FooterItem $gap={6}><Label $size={13} $ls={-0.05} $weight={500}>CloudShell</Label></FooterItem>
        <FooterItem $gap={27}><Label $size={13} $ls={-0.2} $weight={500}>Feedback</Label></FooterItem>
        <Push>
          <Label $size={13} $ls={-0.06} $color="#d0d1d6">© 2025, Amazon Web Services, Inc. or its affiliates.</Label>
          <FooterItem $gap={33}><Label $size={13} $ls={-0.15} $weight={500}>Privacy</Label></FooterItem>
          <FooterItem $gap={27}><Label $size={13} $ls={-0.15} $weight={500}>Terms</Label></FooterItem>
          <FooterItem $gap={27}><Label $size={13} $ls={-0.28} $weight={500}>Cookie preferences</Label></FooterItem>
        </Push>
      </Footer>

      <Taskbar>
        <Weather>
          <WeatherIcon>
            <CloudIcon />
            <Badge $x={11.5} $y={-1.5} $bg="#c42b1c">
              <Label $size={12}>2</Label>
            </Badge>
          </WeatherIcon>
          <TwoLine>
            <Label $size={13} $ls={-0.2}>23°C</Label>
            <Label $size={13} $color="#b5b4b3">Cloudy</Label>
          </TwoLine>
        </Weather>
        <WindowsLogo />
        <TaskSearch>
          <SearchIcon size={17} stroke="#2b2b2b" width={1.8} />
          <Label $size={14} $ls={0.1}>Search</Label>
        </TaskSearch>
        <TaskSlot><TaskViewIcon /></TaskSlot>
        <TaskSlot><CopilotIcon /></TaskSlot>
        <TaskSlot><FolderIcon /></TaskSlot>
        <TaskSlot><StoreIcon /></TaskSlot>
        <TaskSlot>
          <GetHelpIcon />
          <Badge $x={23} $y={3.5} $bg="#ffc20e" />
        </TaskSlot>
        <TaskSlot><TodoIcon /></TaskSlot>
        <TaskSlot><EdgeIcon /></TaskSlot>
        <TaskSlot><ChromeLogo size={26} /></TaskSlot>
        <TaskSlot><OutlookIcon /></TaskSlot>
        <TaskSlot $active $mark="wide">
          <ChromeLogo size={26} />
          <Badge $x={23} $y={4} $bg="#ec407a">
            <Label $size={11}>Y</Label>
          </Badge>
        </TaskSlot>
        <TaskSlot $mark="dot">
          <ChromeLogo size={26} />
          <Badge $x={23} $y={4} $bg="#1d191d">
            <PersonBadge />
          </Badge>
        </TaskSlot>
        <Tray>
          <TrayChevron />
          <TrayItem $gap={20}><OneDriveOff /></TrayItem>
          <TrayItem $gap={19}>
            <TwoLine $align="center">
              <Label $size={13} $ls={-0.1}>ENG</Label>
              <Label $size={13}>IN</Label>
            </TwoLine>
          </TrayItem>
          <TrayItem $gap={18.5}><WifiIcon /></TrayItem>
          <TrayItem $gap={9}><SpeakerIcon /></TrayItem>
          <TrayItem $gap={9}><BatteryIcon /></TrayItem>
          <TrayItem $gap={16.5}>
            <TwoLine $align="flex-end">
              <Label $size={13} $ls={-0.2}>07:16</Label>
              <Label $size={13} $ls={0.1}>20-06-2025</Label>
            </TwoLine>
          </TrayItem>
          <TrayItem $gap={9.5}><SnoozeBell /></TrayItem>
        </Tray>
      </Taskbar>
    </Screen>
  );
}
